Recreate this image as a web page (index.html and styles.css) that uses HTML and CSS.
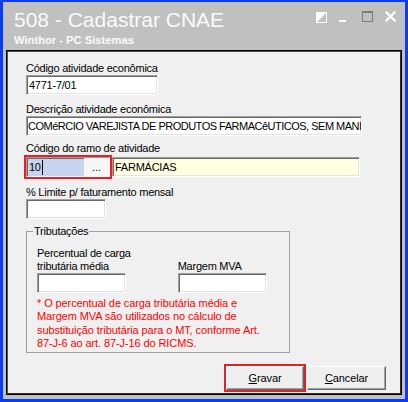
FILE: index.html
```html
<!DOCTYPE html>
<html lang="pt-BR">
<head>
<meta charset="utf-8">
<title>508 - Cadastrar CNAE</title>
<link rel="stylesheet" href="styles.css">
</head>
<body>
<div class="window">
  <div class="titlebar">
    <div class="titles">
      <div class="title">508 - Cadastrar CNAE</div>
      <div class="subtitle">Winthor - PC Sistemas</div>
    </div>
    <div class="controls">
      <svg class="ctl" width="12" height="12" viewBox="0 0 12 12"><rect x="0.5" y="1.5" width="10" height="10" fill="none" stroke="#fff"/><polygon points="1,2 10,2 1,11" fill="#fff"/></svg>
      <svg class="ctl" width="12" height="12" viewBox="0 0 12 12"><rect x="0" y="9" width="7" height="2" fill="#fff"/></svg>
      <svg class="ctl" width="12" height="12" viewBox="0 0 12 12"><rect x="0.5" y="0.5" width="10" height="10" fill="none" stroke="#7c7c7c"/><rect x="0" y="0" width="11" height="2" fill="#7c7c7c"/></svg>
      <svg class="ctl" width="12" height="12" viewBox="0 0 12 12"><path d="M0.7 0.7 L10.3 10.3 M10.3 0.7 L0.7 10.3" stroke="#fff" stroke-width="2.2" fill="none"/></svg>
    </div>
  </div>
  <div class="panel">
    <div class="field f1">
      <div class="label">Código atividade econômica</div>
      <div class="edit w-cod">4771-7/01</div>
    </div>
    <div class="field f2">
      <div class="label">Descrição atividade econômica</div>
      <div class="edit w-desc">COMéRCIO VAREJISTA DE PRODUTOS FARMACêUTICOS, SEM MANI</div>
    </div>
    <div class="field f3">
      <div class="label">Código do ramo de atividade</div>
      <div class="ramo-row">
        <div class="highlight">
          <div class="combo">
            <div class="combo-val">10<span class="caret"></span></div>
            <div class="combo-btn">...</div>
          </div>
        </div>
        <div class="edit readonly w-ramo">FARMÁCIAS</div>
      </div>
    </div>
    <div class="field f4">
      <div class="label">% Limite p/ faturamento mensal</div>
      <div class="edit w-lim"></div>
    </div>
    <fieldset class="group">
      <legend>Tributações</legend>
      <div class="group-row">
        <div class="col">
          <div class="label two">Percentual de carga<br>tributária média</div>
          <div class="edit w-col"></div>
        </div>
        <div class="col">
          <div class="label">Margem MVA</div>
          <div class="edit w-col"></div>
        </div>
      </div>
      <p class="note">* O percentual de carga tributária média e<br>Margem MVA são utilizados no cálculo de<br>substituição tributária para o MT, conforme Art.<br>87-J-6 ao art. 87-J-16 do RICMS.</p>
    </fieldset>
    <div class="buttons">
      <div class="btn-highlight"><button class="btn btn-gravar" type="button"><u>G</u>ravar</button></div>
      <button class="btn btn-cancel" type="button"><u>C</u>ancelar</button>
    </div>
  </div>
</div>
</body>
</html>
```
FILE: styles.css
```css
* { box-sizing: border-box; }
html, body { margin: 0; padding: 0; background: #c0c0c0; }
body {
  font-family: "Liberation Sans", Arial, sans-serif;
  font-size: 11px;
  letter-spacing: -0.25px;
  color: #000;
}
.window {
  width: 408px;
  height: 402px;
  border: 3px solid #0a3cf5;
  border-top-width: 2px;
  background: #c0c0c0;
  padding: 0 3px 4px 3px;
  display: flex;
  flex-direction: column;
}
.titlebar {
  height: 48px;
  display: flex;
  justify-content: space-between;
  align-items: flex-start;
}
.titles {
  padding: 6px 0 0 8px;
  color: #fafafa;
}
.title {
  font-size: 21px;
  line-height: 24px;
  letter-spacing: 0;
}
.subtitle {
  margin-top: 1px;
  font-size: 11.2px;
  line-height: 14px;
  font-weight: bold;
  letter-spacing: 0;
}
.controls {
  display: flex;
  gap: 11px;
  margin-top: 9px;
  padding-right: 5px;
}
.ctl { display: block; }
.panel {
  flex: 1;
  background: #f0f0f0;
  border: 1px solid #000;
  box-shadow: inset 1px 1px 0 #505050, inset -1px -1px 0 #303030;
  padding: 11px 0 0 19px;
  display: flex;
  flex-direction: column;
  align-items: flex-start;
}
.label {
  line-height: 13px;
  height: 13px;
  white-space: nowrap;
}
.label.two { height: 26px; }
.field { display: flex; flex-direction: column; align-items: flex-start; }
.f2 { margin-top: 8px; }
.f3 { margin-top: 6px; }
.f4 { margin-top: 7px; }
.edit {
  height: 20px;
  background: #fff;
  border: 1px solid;
  border-color: #a0a0a0 #fff #fff #a0a0a0;
  box-shadow: inset 1px 1px 0 #696969, inset -1px -1px 0 #e3e3e3;
  padding: 0 2px 0 2px;
  line-height: 18px;
  white-space: nowrap;
  overflow: hidden;
}
.w-cod { width: 132px; }
.w-desc { width: 336px; letter-spacing: -0.5px; padding-left: 1px; padding-right: 0; }
.w-ramo { width: 248px; }
.w-lim { width: 80px; }
.w-col { width: 89px; }
.readonly { background: #ffffe1; }
.ramo-row {
  display: flex;
  align-items: center;
  margin-left: -2px;
}
.highlight {
  border: 2px solid #ec1c24;
}
.combo {
  width: 84px;
  height: 20px;
  display: flex;
  border: 1px solid;
  border-color: #a0a0a0 #fff #fff #a0a0a0;
  box-shadow: inset 1px 1px 0 #696969;
  background: #c6d4ef;
}
.combo-val {
  flex: 1;
  padding: 1px 0 0 2px;
  line-height: 17px;
  display: flex;
  align-items: center;
}
.caret {
  display: inline-block;
  width: 1px;
  height: 15px;
  background: #000;
  margin-left: 1px;
}
.combo-btn {
  width: 25px;
  background: #f6f6f6;
  text-align: center;
  line-height: 18px;
  letter-spacing: 0;
}
.group {
  margin: 6px 0 0 0;
  width: 264px;
  min-width: 0;
  border: 1px solid #a0a0a0;
  padding: 9px 6px 2px 10px;
}
.group legend {
  padding: 0 1px;
  margin-left: -4px;
  line-height: 13px;
}
.group-row {
  display: flex;
  align-items: flex-end;
  gap: 47px;
}
.col { display: flex; flex-direction: column; }
.note {
  margin: 4px 0 0 0;
  color: #ff0000;
  line-height: 13.3px;
  letter-spacing: -0.1px;
  white-space: nowrap;
}
.buttons {
  margin-top: 11px;
  align-self: flex-end;
  margin-right: 15px;
  display: flex;
  align-items: center;
}
.btn-highlight { border: 2px solid #ec1c24; }
.btn {
  font-family: "Liberation Sans", Arial, sans-serif;
  font-size: 11px;
  letter-spacing: -0.1px;
  height: 24px;
  background: #efefef;
  border: 1px solid;
  border-color: #fff #696969 #696969 #fff;
  box-shadow: inset -1px -1px 0 #a0a0a0;
  padding: 0;
  color: #000;
  display: block;
}
.btn u { text-decoration: underline; }
.btn-gravar { width: 78px; }
.btn-cancel { width: 79px; margin-left: 1px; }
```
